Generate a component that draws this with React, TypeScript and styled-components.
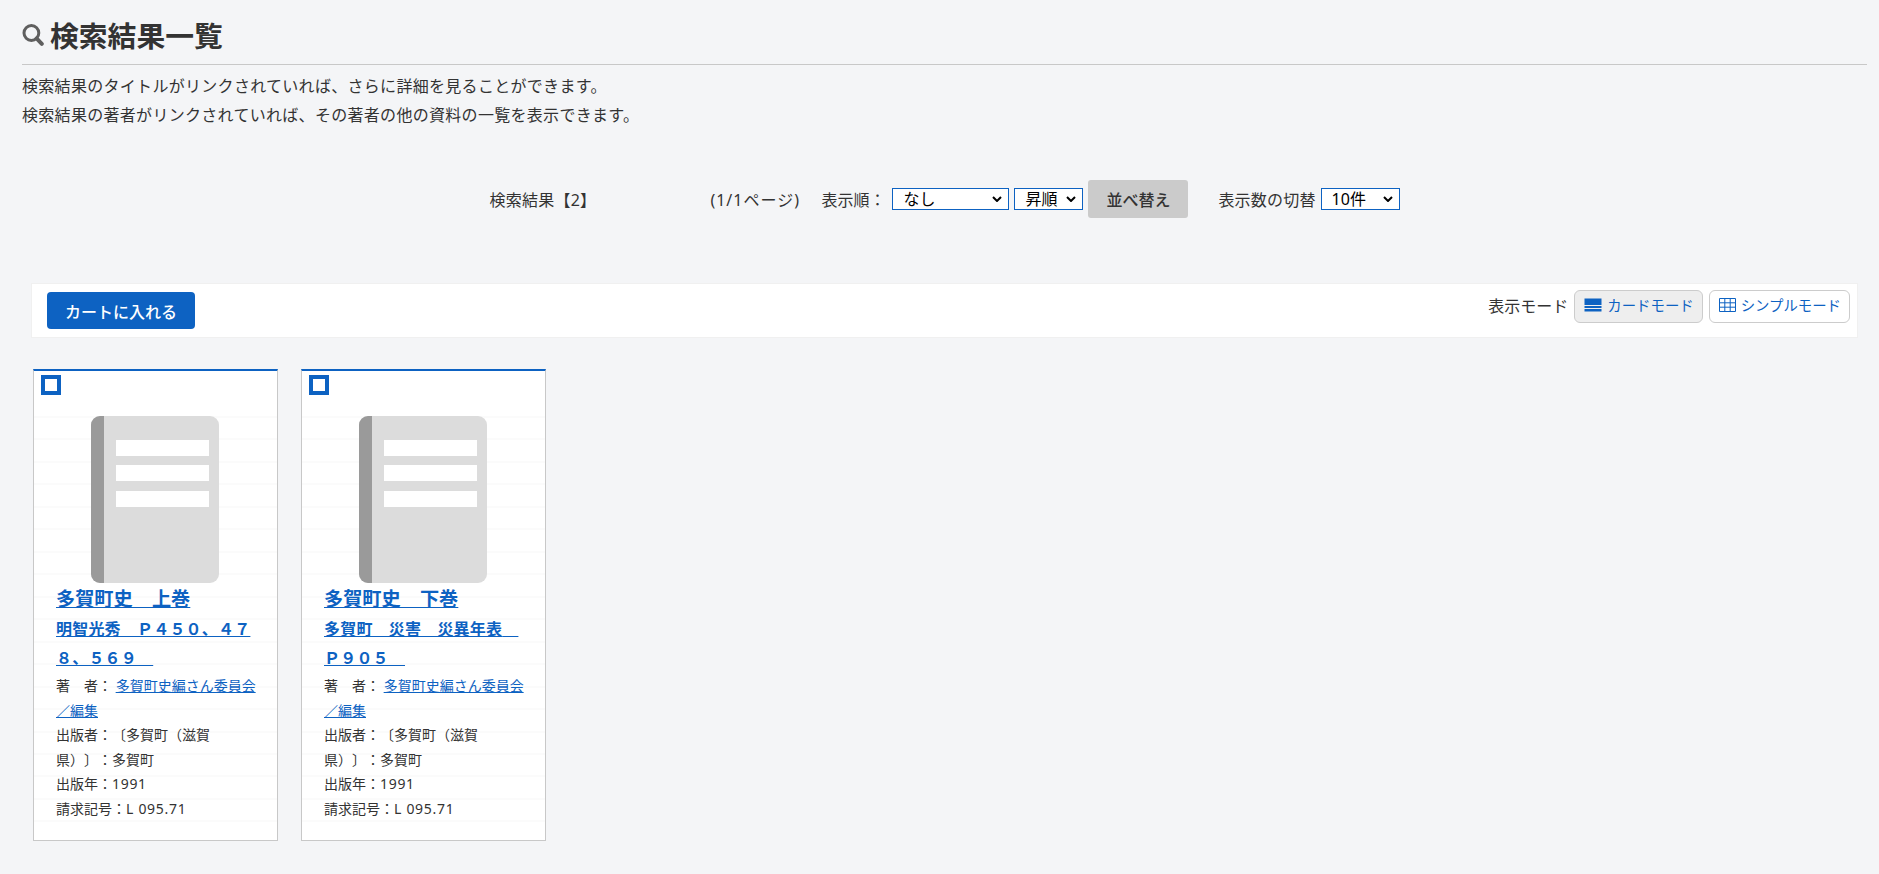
import { createGlobalStyle, styled } from "styled-components";

const BLUE = "#0d62c2";

const CHEVRON =
  "url(\"data:image/svg+xml,%3Csvg xmlns='http://www.w3.org/2000/svg' width='10' height='6' viewBox='0 0 10 6'%3E%3Cpath d='M1 1l4 4 4-4' fill='none' stroke='%23000' stroke-width='2'/%3E%3C/svg%3E\")";

const GlobalStyle = createGlobalStyle`
  html, body {
    margin: 0;
    padding: 0;
    background-color: #f4f5f7;
    color: #333;
    font-family: "Noto Sans", "Noto Sans CJK JP", sans-serif;
    font-size: 16px;
    text-spacing-trim: space-all;
  }
  * {
    box-sizing: border-box;
  }
`;

const books = [
  {
    title: "多賀町史　上巻",
    sub: "明智光秀　Ｐ４５０、４７８、５６９　",
  },
  {
    title: "多賀町史　下巻",
    sub: "多賀町　災害　災異年表　Ｐ９０５　",
  },
];

const SearchIcon = () => (
  <svg width="22" height="22" viewBox="0 0 22 22" aria-hidden="true">
    <circle cx="9.4" cy="9" r="7.4" fill="none" stroke="#5f5f5f" strokeWidth="3" />
    <path d="M14.6 14.4 L19.8 19.8" stroke="#5f5f5f" strokeWidth="4" strokeLinecap="round" />
  </svg>
);

const CardIcon = () => (
  <svg width="18" height="14" viewBox="0 0 18 14" aria-hidden="true">
    <rect x="0.5" y="0.5" width="17" height="6.5" fill={BLUE} />
    <rect x="0.5" y="8" width="17" height="2" fill={BLUE} />
    <rect x="0.5" y="11" width="17" height="2.5" fill={BLUE} />
  </svg>
);

const TableIcon = () => (
  <svg width="17" height="14" viewBox="0 0 17 14" aria-hidden="true">
    <path
      d="M0.5 0.5H16.5V13.5H0.5Z M0.5 4.8H16.5 M0.5 9.2H16.5 M5.8 0.5V13.5 M11.2 0.5V13.5"
      fill="none"
      stroke={BLUE}
      strokeWidth="1"
    />
  </svg>
);

const BookIcon = () => (
  <svg width="128" height="167" viewBox="0 0 128 167" aria-hidden="true">
    <rect width="128" height="167" rx="9" fill="#dcdcdc" />
    <path d="M9 0H13V167H9A9 9 0 0 1 0 158V9A9 9 0 0 1 9 0Z" fill="#9a9a9a" />
    <rect x="25" y="24" width="93" height="16" fill="#fff" />
    <rect x="25" y="49" width="93" height="16" fill="#fff" />
    <rect x="25" y="75" width="93" height="16" fill="#fff" />
  </svg>
);

const App = () => {
  return (
    <Page>
      <GlobalStyle />
      <Heading>
        <SearchIcon />
        検索結果一覧
      </Heading>
      <Intro>検索結果のタイトルがリンクされていれば、さらに詳細を見ることができます。</Intro>
      <Intro>検索結果の著者がリンクされていれば、その著者の他の資料の一覧を表示できます。</Intro>

      <SortRow>
        <ResultCount>検索結果【2】</ResultCount>
        <PageCount>(1/1ページ)</PageCount>
        <SortLabel>表示順：</SortLabel>
        <Select $width={117} defaultValue="none">
          <option value="none">なし</option>
          <option value="title">タイトル</option>
        </Select>
        <Select $width={69} defaultValue="asc">
          <option value="asc">昇順</option>
          <option value="desc">降順</option>
        </Select>
        <SortButton type="button">並べ替え</SortButton>
        <SwitchLabel>表示数の切替</SwitchLabel>
        <Select $width={79} defaultValue="10">
          <option value="10">10件</option>
          <option value="20">20件</option>
        </Select>
      </SortRow>

      <Toolbar>
        <CartButton type="button">カートに入れる</CartButton>
        <ModeGroup>
          <ModeLabel>表示モード</ModeLabel>
          <ModeButton type="button" $active>
            <CardIcon />
            カードモード
          </ModeButton>
          <ModeButton type="button">
            <TableIcon />
            シンプルモード
          </ModeButton>
        </ModeGroup>
      </Toolbar>

      <CardGrid>
        {books.map((book) => (
          <Card key={book.title}>
            <CheckBox />
            <Cover>
              <BookIcon />
            </Cover>
            <CardBody>
              <Title href="#">{book.title}</Title>
              <SubTitle>
                <a href="#">{book.sub}</a>
              </SubTitle>
              <Meta>
                著　者： <a href="#">多賀町史編さん委員会／編集</a>
              </Meta>
              <Meta>出版者：〔多賀町（滋賀県）〕：多賀町</Meta>
              <Meta>
                出版年：<Latin>1991</Latin>
              </Meta>
              <Meta>
                請求記号：<Latin>L 095.71</Latin>
              </Meta>
            </CardBody>
          </Card>
        ))}
      </CardGrid>
    </Page>
  );
};

export default App;

const Page = styled.main`
  padding: 0 12px 33px 22px;
`;

const Heading = styled.h1`
  display: flex;
  align-items: center;
  gap: 6px;
  height: 65px;
  margin: 0 0 7px;
  padding-top: 5px;
  border-bottom: 1px solid #c8c8c8;
  font-size: 28.8px;
  font-weight: 700;
`;

const Intro = styled.p`
  margin: 0;
  font-size: 16px;
  line-height: 29px;
  letter-spacing: 0.3px;
`;

const SortRow = styled.div`
  display: flex;
  align-items: center;
  justify-content: center;
  height: 38px;
  margin-top: 50px;
  font-size: 16px;
`;

const ResultCount = styled.span`
  width: 221px;
  letter-spacing: 0.25px;
`;

const PageCount = styled.span`
  width: 111px;
  letter-spacing: 1px;
`;

const SortLabel = styled.span`
  width: 71px;
`;

const SwitchLabel = styled.span`
  margin: 0 5px 0 30px;
  letter-spacing: 0.2px;
`;

const Select = styled.select<{ $width: number }>`
  appearance: none;
  width: ${(props) => props.$width}px;
  height: 22px;
  margin-right: 5px;
  padding: 0 0 0 10px;
  border: 1px solid ${BLUE};
  border-radius: 0;
  background: #fff ${CHEVRON} no-repeat right 6px center;
  color: #000;
  font-family: "Noto Sans", "Noto Sans CJK JP", sans-serif;
  font-size: 16px;
  line-height: 20px;

  &:last-child {
    margin-right: 0;
  }
`;

const SortButton = styled.button`
  width: 100px;
  height: 38px;
  border: none;
  border-radius: 3px;
  background-color: #cbcbcb;
  color: #333;
  font-family: inherit;
  font-size: 16px;
  font-weight: 500;
`;

const Toolbar = styled.div`
  display: flex;
  align-items: flex-start;
  justify-content: space-between;
  height: 55px;
  margin: 65px 9px 0;
  padding: 8px 7px 0 15px;
  border: 1px solid #f0f0f0;
  background-color: #fff;
`;

const CartButton = styled.button`
  width: 148px;
  height: 37px;
  border: none;
  border-radius: 4px;
  background-color: ${BLUE};
  color: #fff;
  font-family: inherit;
  font-size: 16px;
  font-weight: 500;
`;

const ModeGroup = styled.div`
  display: flex;
  align-items: center;
  gap: 6px;
  margin-top: -2px;
`;

const ModeLabel = styled.span`
  padding-bottom: 4px;
  font-size: 16px;
`;

const ModeButton = styled.button<{ $active?: boolean }>`
  display: flex;
  align-items: center;
  justify-content: center;
  gap: 5px;
  height: 33px;
  padding: 0 8px 4px 9px;
  border: 1px solid #ccc;
  border-radius: 6px;
  background-color: ${(props) => (props.$active ? "#eeeeee" : "#fff")};
  color: ${BLUE};
  font-family: inherit;
  font-size: 14.4px;
`;

const CardGrid = styled.div`
  display: flex;
  gap: 23px;
  margin: 31px 0 0 11px;
`;

const Card = styled.article`
  width: 245px;
  height: 472px;
  padding: 4px 1px 0;
  border: 1px solid #c8c8c8;
  border-top: 2px solid ${BLUE};
  background-color: #fff;
  background-image: repeating-linear-gradient(
    to bottom,
    transparent 0,
    transparent 21.5px,
    #f6f6f6 21.5px,
    #f6f6f6 22.47px
  );
  background-position: 0 1.5px;
`;

const CheckBox = styled.div`
  width: 20px;
  height: 20px;
  margin-left: 6px;
  border: 4px solid ${BLUE};
  background-color: #fff;
`;

const Cover = styled.div`
  height: 167px;
  margin-top: 21px;
  padding-left: 56px;

  svg {
    display: block;
  }
`;

const CardBody = styled.div`
  padding: 0 18px 0 21px;
`;

const Title = styled.a`
  display: inline-block;
  color: ${BLUE};
  font-size: 19.2px;
  font-weight: 700;
  line-height: 32px;
`;

const SubTitle = styled.div`
  margin-bottom: 1px;
  font-size: 16px;
  font-weight: 700;
  line-height: 29px;
  letter-spacing: 0.2px;

  a {
    color: ${BLUE};
  }
`;

const Meta = styled.div`
  font-size: 14px;
  line-height: 24.6px;

  a {
    color: ${BLUE};
  }
`;

const Latin = styled.span`
  letter-spacing: 0.7px;
`;
